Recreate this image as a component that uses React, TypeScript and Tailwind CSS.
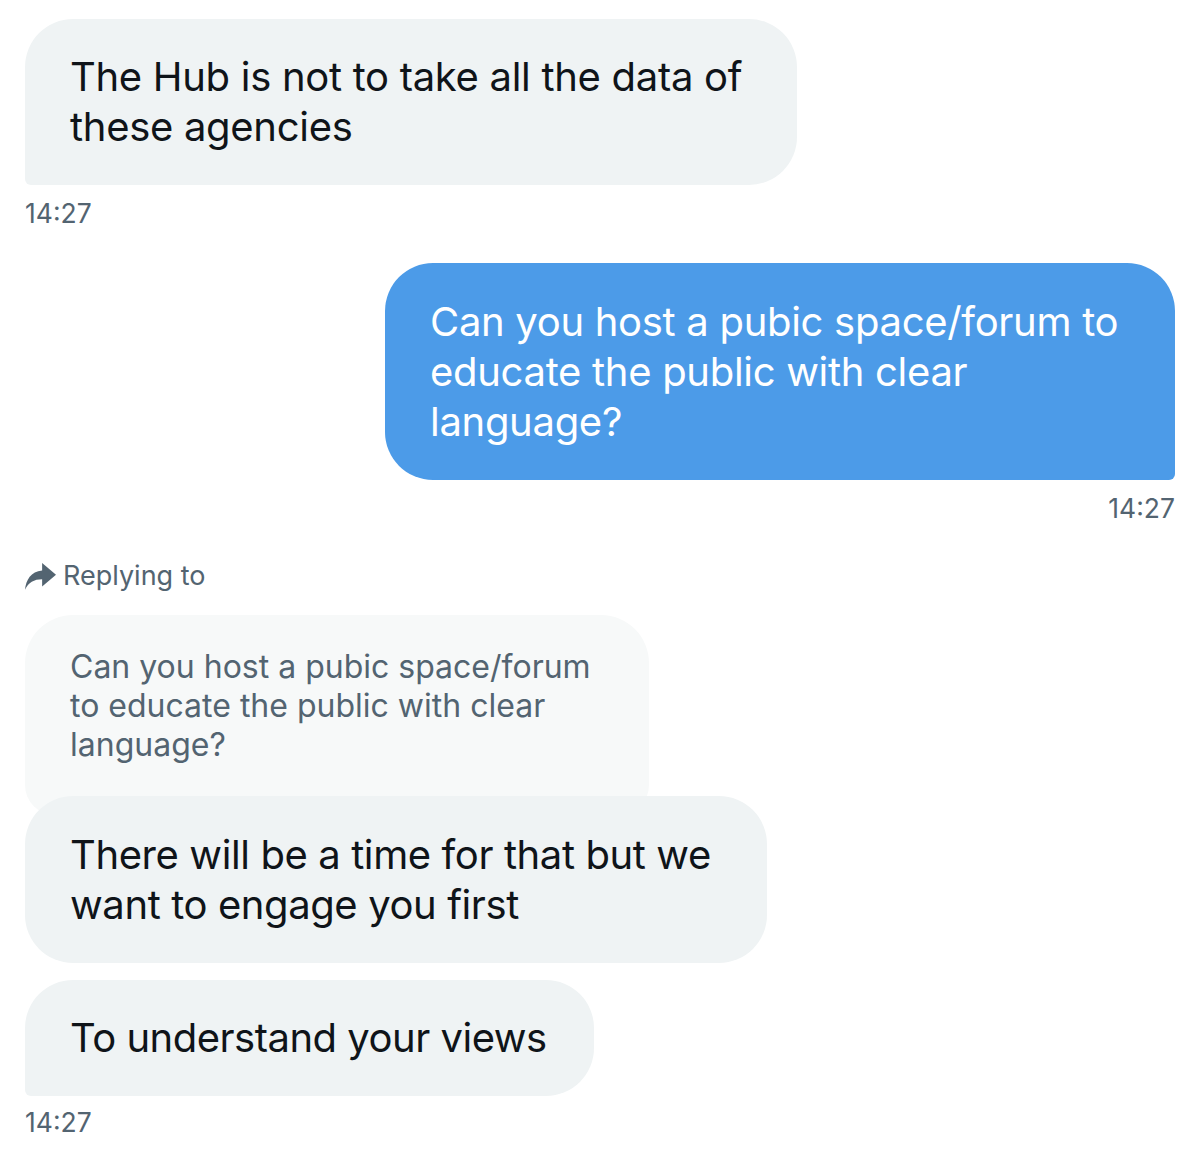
import React from "react";

const font = { fontFamily: "Inter, 'Noto Sans', sans-serif" };

function ReplyIcon() {
  return (
    <svg viewBox="3 3.5 19 17" className="w-[31px] h-[28px]" fill="#536471">
      <path d="M13.5 8.6V4l8.5 7.2-8.5 7.2v-4.4c-5 0-8.4 1.9-10.5 6.5 0.6-6.2 3.6-11.2 10.5-11.9z" />
    </svg>
  );
}

export default function App() {
  return (
    <div className="w-[1200px] h-[1168px] bg-white flex flex-col px-[25px] pt-[19px]" style={font}>
      {/* Bubble 1 */}
      <div className="w-[772px] bg-[#eff3f4] rounded-[48px] rounded-bl-[6px] pl-[45px] pr-[40px] py-[33px] text-[#0f1419] text-[40px] leading-[50px] tracking-[-0.3px]">
        The Hub is not to take all the data of these agencies
      </div>
      <div className="mt-[13px] text-[26.5px] leading-[30px] text-[#536471]">14:27</div>

      {/* Blue bubble */}
      <div className="self-end mt-[35px] w-[790px] bg-[#4c9be8] rounded-[48px] rounded-br-[6px] pl-[45px] pr-[40px] pt-[34px] pb-[33px] text-white text-[40px] leading-[50px] tracking-[-0.3px]">
        Can you host a pubic space/forum to educate the public with clear language?
      </div>
      <div className="self-end mt-[13px] text-[26.5px] leading-[30px] text-[#536471]">14:27</div>

      {/* Replying to */}
      <div className="mt-[38px] flex items-center gap-[7px] h-[30px]">
        <ReplyIcon />
        <span className="text-[27px] leading-[30px] text-[#536471]">Replying to</span>
      </div>

      {/* Quote */}
      <div className="mt-[24px] w-[624px] bg-[#f7f9f9] rounded-t-[48px] rounded-b-[30px] pl-[45px] pr-[40px] pt-[32px] pb-[51px] text-[#536471] text-[32px] leading-[39px]">
        Can you host a pubic space/forum to educate the public with clear language?
      </div>

      {/* Bubble 3 */}
      <div className="-mt-[19px] w-[742px] bg-[#eff3f4] rounded-[48px] pl-[45px] pr-[40px] pt-[34px] pb-[33px] text-[#0f1419] text-[40px] leading-[50px] tracking-[-0.4px]">
        There will be a time for that but we want to engage you first
      </div>

      {/* Bubble 4 */}
      <div className="mt-[17px] self-start bg-[#eff3f4] rounded-[48px] rounded-bl-[6px] pl-[45px] pr-[47px] pt-[33px] pb-[33px] text-[#0f1419] text-[40px] leading-[50px] tracking-[-0.5px]">
        To understand your views
      </div>
      <div className="mt-[11px] text-[26.5px] leading-[30px] text-[#536471]">14:27</div>
    </div>
  );
}
